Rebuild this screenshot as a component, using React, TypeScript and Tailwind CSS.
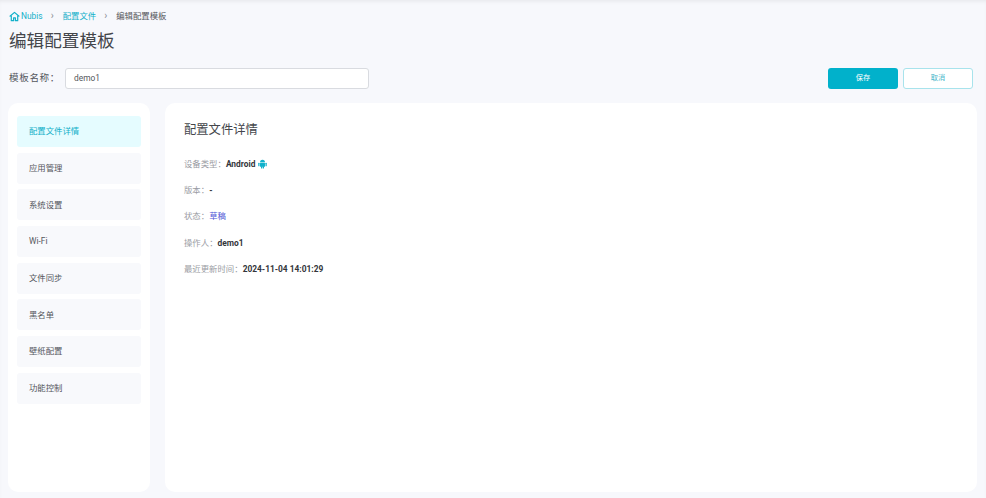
import React from 'react';

const menuItems = ['配置文件详情', '应用管理', '系统设置', 'Wi-Fi', '文件同步', '黑名单', '壁纸配置', '功能控制'];

const AndroidIcon: React.FC = () => (
  <svg width="9" height="10" viewBox="0 0 18 20" fill="#0fb1cb" className="ml-[3px]">
    <path d="M4 6.5a5 5 0 0 1 10 0z" />
    <rect x="4" y="7.5" width="10" height="8" rx="1" />
    <rect x="0.5" y="7.5" width="2.5" height="7" rx="1.2" />
    <rect x="15" y="7.5" width="2.5" height="7" rx="1.2" />
    <rect x="6" y="14" width="2.5" height="5" rx="1.2" />
    <rect x="9.5" y="14" width="2.5" height="5" rx="1.2" />
  </svg>
);

const HomeIcon: React.FC = () => (
  <svg width="11" height="11" viewBox="0 0 24 24" fill="none" stroke="#12b0c9" strokeWidth="2.6" strokeLinejoin="round">
    <path d="M1.5 12 12 3l10.5 9" />
    <path d="M5 10v11h5v-6h4v6h5V10" />
  </svg>
);

const DetailRow: React.FC<{ label: string; children: React.ReactNode }> = ({ label, children }) => (
  <div className="flex items-center h-[12px] text-[8.4px]">
    <span className="text-[#9a9ca3]">{label}：</span>
    {children}
  </div>
);

const App: React.FC = () => {
  return (
    <div
      className="w-[986px] h-[498px] overflow-hidden bg-[#f7f8fc] shadow-[inset_0_3px_4px_-2px_rgba(0,0,0,0.08)] flex flex-col"
      style={{ fontFamily: 'Roboto, "Noto Sans CJK SC", sans-serif' }}
    >
      {/* Breadcrumb */}
      <div className="flex items-center h-[12px] mt-[10px] ml-[9px] text-[8.4px]">
        <HomeIcon />
        <span className="ml-[1px] text-[#12b0c9]">Nubis</span>
        <span className="ml-[8px] mr-[9px] text-[#8a8d94] text-[10px] leading-none">›</span>
        <span className="text-[#12b0c9]">配置文件</span>
        <span className="ml-[8px] mr-[9px] text-[#8a8d94] text-[10px] leading-none">›</span>
        <span className="text-[#55575c]">编辑配置模板</span>
      </div>

      <h1 className="ml-[9px] mt-[7px] h-[24px] leading-[24px] text-[17.6px] font-normal text-[#44464b]">编辑配置模板</h1>

      {/* Name row */}
      <div className="flex items-center h-[21px] mt-[15px] ml-[9px] mr-[13px]">
        <span className="w-[56px] text-[9.6px] tracking-[0.6px] text-[#55575c]">模板名称：</span>
        <div className="w-[304px] h-[21px] bg-white border border-[#d9dbe0] rounded-[3px] flex items-center pl-[8px] text-[8.4px] text-[#55575c]">
          demo1
        </div>
        <div className="ml-auto flex gap-[5px]">
          <button className="w-[70px] h-[21px] rounded-[3px] bg-[#01b1cb] text-white text-[7.2px]">保存</button>
          <button className="w-[70px] h-[21px] rounded-[3px] bg-white border border-[#a8e3ec] text-[#4bb8cb] text-[7.2px]">取消</button>
        </div>
      </div>

      {/* Body */}
      <div className="flex gap-[15px] mt-[14px] ml-[8px] mr-[9px] h-[389px]">
        <div className="w-[142px] bg-white rounded-[10px] pt-[13px] px-[9px] flex flex-col gap-[5.7px]">
          {menuItems.map((item, i) => (
            <div
              key={item}
              className={`h-[31px] rounded-[3px] flex items-center pl-[12px] text-[8.4px] ${
                i === 0 ? 'bg-[#e5fcff] text-[#12b0c9]' : 'bg-[#f8f9fc] text-[#55575c]'
              }`}
            >
              {item}
            </div>
          ))}
        </div>

        <div className="flex-1 bg-white rounded-[10px] pl-[19px] pt-[19px]">
          <h2 className="h-[16px] leading-[16px] text-[12.3px] font-normal text-[#44464b]">配置文件详情</h2>
          <div className="mt-[20px] flex flex-col gap-[14.3px]">
            <DetailRow label="设备类型">
              <span className="font-bold text-[#33353a]">Android</span>
              <AndroidIcon />
            </DetailRow>
            <DetailRow label="版本">
              <span className="font-bold text-[#33353a]">-</span>
            </DetailRow>
            <DetailRow label="状态">
              <span className="text-[#4f55d6]">草稿</span>
            </DetailRow>
            <DetailRow label="操作人">
              <span className="font-bold text-[#33353a]">demo1</span>
            </DetailRow>
            <DetailRow label="最近更新时间">
              <span className="font-bold text-[#33353a]">2024-11-04 14:01:29</span>
            </DetailRow>
          </div>
        </div>
      </div>
    </div>
  );
};

export default App;
